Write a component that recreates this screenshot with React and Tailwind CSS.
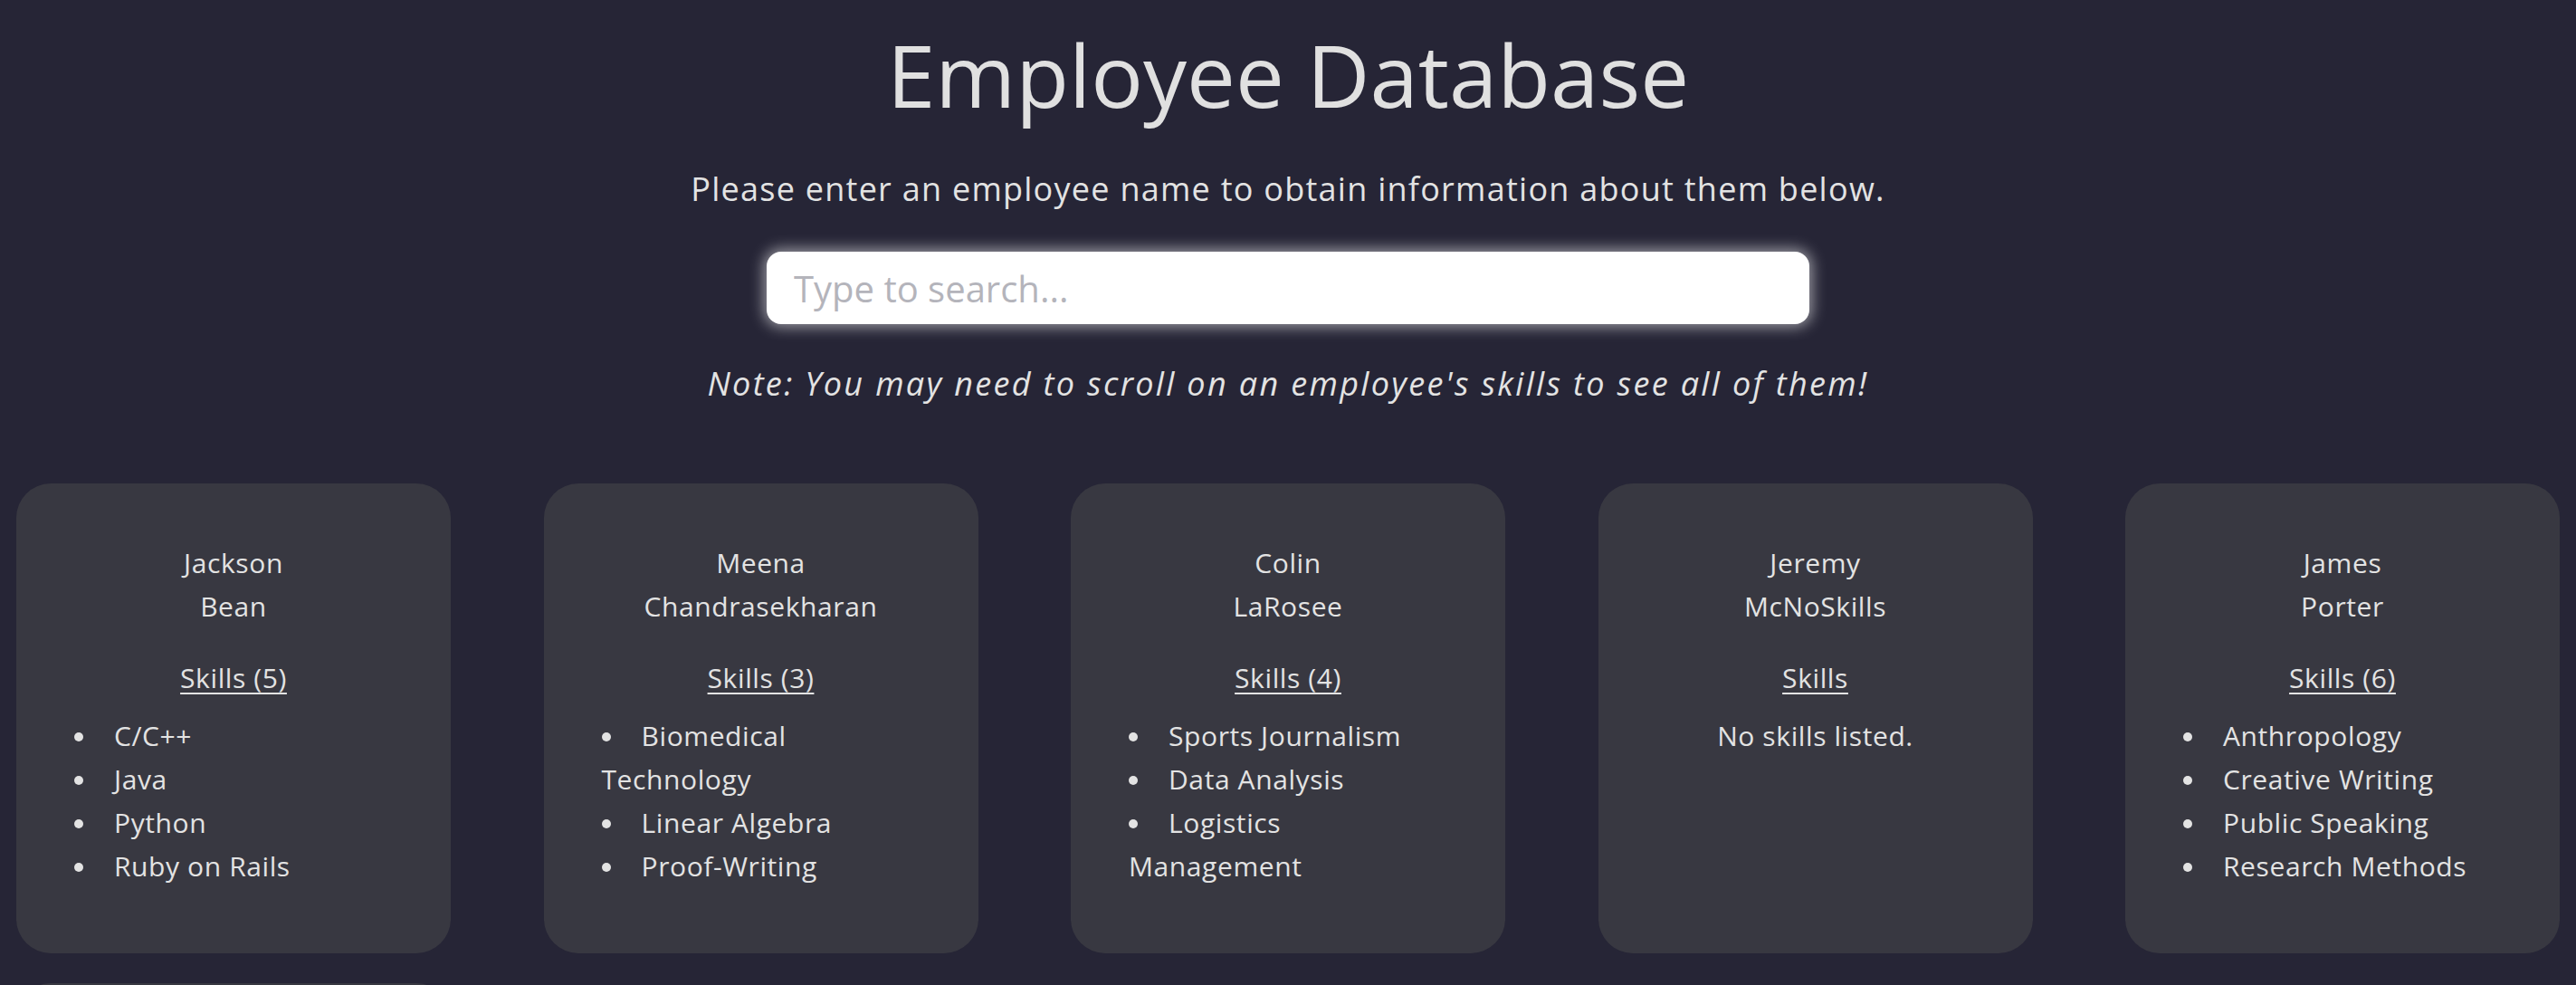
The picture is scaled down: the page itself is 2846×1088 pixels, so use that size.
import React from 'react';

const employees = [
  { first: 'Jackson', last: 'Bean', skills: ['C/C++', 'Java', 'Python', 'Ruby on Rails', 'SQL'] },
  { first: 'Meena', last: 'Chandrasekharan', skills: ['Biomedical Technology', 'Linear Algebra', 'Proof-Writing'] },
  { first: 'Colin', last: 'LaRosee', skills: ['Sports Journalism', 'Data Analysis', 'Logistics Management', 'Statistics'] },
  { first: 'Jeremy', last: 'McNoSkills', skills: [] },
  {
    first: 'James',
    last: 'Porter',
    skills: ['Anthropology', 'Creative Writing', 'Public Speaking', 'Research Methods', 'Sociology', 'Statistics'],
  },
  { first: 'Sarah', last: 'Nguyen', skills: ['Accounting', 'Finance'] },
];

const EmployeeCard = ({ employee }) => {
  const count = employee.skills.length;

  return (
    <div className="w-[480px] h-[519px] rounded-[38px] bg-[#383841] pt-[64px] text-[30px] leading-[48px] tracking-[0.02em] text-[#e3e3e3] flex flex-col">
      <div className="text-center">
        <div>{employee.first}</div>
        <div>{employee.last}</div>
      </div>

      <div className="mt-[31px] text-center">
        <span className="underline decoration-2 underline-offset-[5px]">
          {count > 0 ? `Skills (${count})` : 'Skills'}
        </span>
      </div>

      {count > 0 ? (
        <ul className="mt-4 h-[192px] overflow-y-auto [scrollbar-width:none] pl-[64px] pr-[64px]">
          {employee.skills.map((skill) => (
            <li key={skill}>
              <span className="inline-block w-[44px] align-middle">
                <span className="block size-[10px] rounded-full bg-[#e3e3e3] -mt-[4px]"></span>
              </span>
              {skill}
            </li>
          ))}
        </ul>
      ) : (
        <p className="mt-4 text-center">No skills listed.</p>
      )}
    </div>
  );
};

export default function App() {
  return (
    <div className="min-h-screen bg-[#262536] text-[#e3e3e3] font-['Open_Sans',sans-serif]">
      <header className="flex flex-col items-center">
        <h1 className="mt-[34px] text-[96px] leading-none font-normal text-[#e0e0e0]">Employee Database</h1>
        <p className="mt-[52px] text-[36px] leading-[54px] tracking-[0.035em]">
          Please enter an employee name to obtain information about them below.
        </p>
        <input
          type="text"
          placeholder="Type to search..."
          className="mt-[42px] w-[1152px] h-[80px] rounded-[16px] bg-white px-[30px] text-[40px] text-[#333] placeholder:text-[#b4b4bb] outline-none shadow-[0_0_16px_3px_rgba(255,255,255,0.55)]"
        />
        <p className="mt-[39px] text-[36px] leading-[54px] italic tracking-[0.065em]">
          Note: You may need to scroll on an employee's skills to see all of them!
        </p>
      </header>

      <main className="mt-[83px] px-[18px] flex flex-wrap justify-between gap-y-[33px] pb-10">
        {employees.map((employee) => (
          <EmployeeCard key={employee.first + employee.last} employee={employee} />
        ))}
      </main>
    </div>
  );
}
